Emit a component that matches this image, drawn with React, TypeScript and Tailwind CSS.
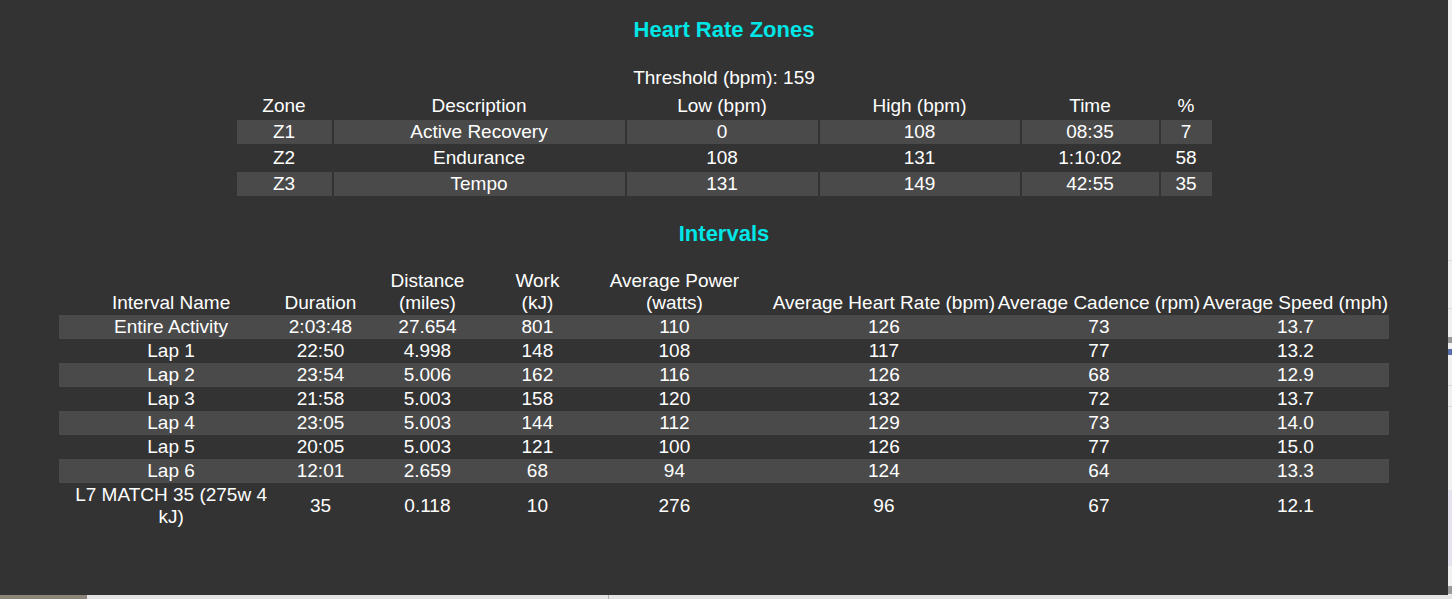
const zones = [
  { zone: "Z1", desc: "Active Recovery", low: "0", high: "108", time: "08:35", pct: "7" },
  { zone: "Z2", desc: "Endurance", low: "108", high: "131", time: "1:10:02", pct: "58" },
  { zone: "Z3", desc: "Tempo", low: "131", high: "149", time: "42:55", pct: "35" },
]

const intervals = [
  ["Entire Activity", "2:03:48", "27.654", "801", "110", "126", "73", "13.7"],
  ["Lap 1", "22:50", "4.998", "148", "108", "117", "77", "13.2"],
  ["Lap 2", "23:54", "5.006", "162", "116", "126", "68", "12.9"],
  ["Lap 3", "21:58", "5.003", "158", "120", "132", "72", "13.7"],
  ["Lap 4", "23:05", "5.003", "144", "112", "129", "73", "14.0"],
  ["Lap 5", "20:05", "5.003", "121", "100", "126", "77", "15.0"],
  ["Lap 6", "12:01", "2.659", "68", "94", "124", "64", "13.3"],
  ["L7 MATCH 35 (275w 4 kJ)", "35", "0.118", "10", "276", "96", "67", "12.1"],
]

// header label lines + column width (px)
const intervalCols: { lines: string[]; w: number }[] = [
  { lines: ["Interval Name"], w: 225 },
  { lines: ["Duration"], w: 72 },
  { lines: ["Distance", "(miles)"], w: 140 },
  { lines: ["Work", "(kJ)"], w: 80 },
  { lines: ["Average Power", "(watts)"], w: 194 },
  { lines: ["Average Heart Rate (bpm)"], w: 225 },
  { lines: ["Average Cadence (rpm)"], w: 205 },
  { lines: ["Average Speed (mph)"], w: 188 },
]

const zoneWidths = [95, 291, 191, 200, 137, 51]

export default function App() {
  return (
    <div
      className="w-[1452px] h-[599px] overflow-hidden bg-[#f1f1f1] flex flex-col"
      style={{ fontFamily: '"Liberation Sans", Arial, sans-serif' }}
    >
      <div className="flex">
        <div className="w-[1448px] h-[595px] bg-[#333333] text-white text-[19px] leading-[22px] flex flex-col items-center">
          <h3 className="mt-[17px] text-[22px] leading-[25px] font-bold text-[#00e6e6]">Heart Rate Zones</h3>
          <div className="mt-[25px]">Threshold (bpm): 159</div>
          <table className="mt-[3px] table-fixed border-separate border-spacing-[2px] text-center">
            <colgroup>
              {zoneWidths.map((w, i) => (
                <col key={i} style={{ width: w }} />
              ))}
            </colgroup>
            <thead>
              <tr>
                {["Zone", "Description", "Low (bpm)", "High (bpm)", "Time", "%"].map((h) => (
                  <th key={h} className="p-px font-normal">
                    {h}
                  </th>
                ))}
              </tr>
            </thead>
            <tbody>
              {zones.map((z, i) => (
                <tr key={z.zone} className={i % 2 === 0 ? "bg-[#4a4a4a]" : ""}>
                  <td className="p-px">{z.zone}</td>
                  <td className="p-px">{z.desc}</td>
                  <td className="p-px">{z.low}</td>
                  <td className="p-px">{z.high}</td>
                  <td className="p-px">{z.time}</td>
                  <td className="p-px">{z.pct}</td>
                </tr>
              ))}
            </tbody>
          </table>

          <h3 className="mt-[23px] text-[22px] leading-[25px] font-bold text-[#00e6e6]">Intervals</h3>
          <table className="mt-[23px] table-fixed border-collapse text-center">
            <colgroup>
              {intervalCols.map((c, i) => (
                <col key={i} style={{ width: c.w }} />
              ))}
            </colgroup>
            <thead>
              <tr>
                {intervalCols.map((c, i) => (
                  <th key={i} className="p-px font-normal align-bottom whitespace-nowrap">
                    {c.lines.map((l) => (
                      <div key={l}>{l}</div>
                    ))}
                  </th>
                ))}
              </tr>
            </thead>
            <tbody>
              {intervals.map((row, i) => (
                <tr key={row[0]} className={i % 2 === 0 ? "bg-[#4a4a4a]" : ""}>
                  {row.map((v, j) => (
                    <td key={j} className="p-px align-middle">
                      {j === 0 ? <div className="max-w-[205px] mx-auto">{v}</div> : v}
                    </td>
                  ))}
                </tr>
              ))}
            </tbody>
          </table>
        </div>

        {/* page peeking out behind the panel */}
        <div className="w-[4px] flex flex-col">
          <div className="h-[260px]" />
          <div className="h-px bg-[#d8d8d8]" />
          <div className="h-[47px]" />
          <div className="h-px bg-[#d8d8d8]" />
          <div className="h-[28px]" />
          <div className="h-[6px] bg-[#9a9a9a]" />
          <div className="h-[6px]" />
          <div className="h-[6px] bg-[#5a6ea8]" />
          <div className="h-[30px]" />
          <div className="h-px bg-[#d8d8d8]" />
          <div className="h-[20px]" />
          <div className="h-px bg-[#d8d8d8]" />
          <div className="h-[83px]" />
          <div className="h-[76px] bg-[#e6e3ee]" />
          <div className="h-[20px]" />
          <div className="h-[8px] bg-[#9a9a9a]" />
        </div>
      </div>
      <div className="flex h-[4px] bg-[#e4e4e4]">
        <div className="w-[87px] bg-[#8b857a]" />
        <div className="w-[521px]" />
        <div className="w-px bg-[#b0b0b0]" />
      </div>
    </div>
  )
}
